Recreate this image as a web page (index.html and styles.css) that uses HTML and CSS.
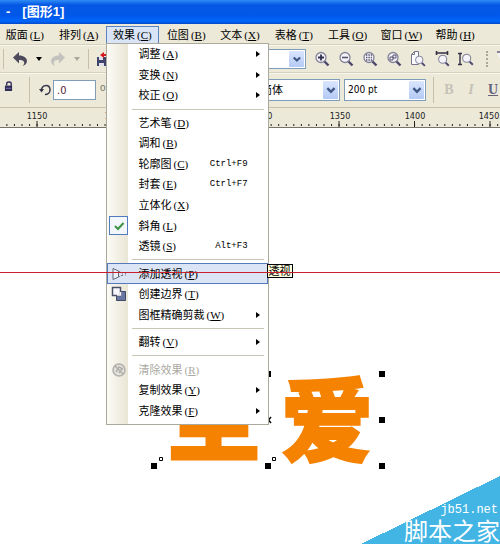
FILE: index.html
```html
<!DOCTYPE html>
<html lang="zh-CN">
<head>
<meta charset="utf-8">
<title>[图形1]</title>
<link rel="stylesheet" href="styles.css">
</head>
<body>
<svg class="defs" aria-hidden="true">
  <defs>
    <symbol id="lens" viewBox="0 0 16 16">
      <path d="M10 10l4.500 4.500" stroke="#4b4870" stroke-width="2.400"/>
      <circle cx="7" cy="6.500" r="5" fill="#f4f4fa" stroke="#85839a" stroke-width="1.300"/>
    </symbol>
    <symbol id="chevron" viewBox="0 0 16 20">
      <path d="M4.500 8l4 4 4-4" fill="none" stroke="#3f5785" stroke-width="2.600"/>
    </symbol>
    <symbol id="more" viewBox="0 0 4 8"><path d="M0 1l4 3-4 3z" fill="#000"/></symbol>
  </defs>
</svg>
<div class="app">
  <header class="title"><span>-</span><span>[图形1]</span></header>
  <nav class="menubar">
    <div class="top"><button>版面<i>(<u>L</u>)</i></button></div>
    <div class="top"><button>排列<i>(<u>A</u>)</i></button></div>
    <div class="top open"><button>效果<i>(<u>C</u>)</i></button>
      <div class="menu">
        <button class="item">调整<i>(<u>A</u>)</i><svg class="more"><use href="#more"/></svg></button>
        <button class="item">变换<i>(<u>N</u>)</i><svg class="more"><use href="#more"/></svg></button>
        <button class="item">校正<i>(<u>O</u>)</i><svg class="more"><use href="#more"/></svg></button>
        <hr>
        <button class="item">艺术笔<i>(<u>D</u>)</i></button>
        <button class="item">调和<i>(<u>B</u>)</i></button>
        <button class="item">轮廓图<i>(<u>C</u>)</i><kbd>Ctrl+F9</kbd></button>
        <button class="item">封套<i>(<u>E</u>)</i><kbd>Ctrl+F7</kbd></button>
        <button class="item">立体化<i>(<u>X</u>)</i></button>
        <button class="item"><svg class="mark" viewBox="0 0 20 20"><rect x=".5" y=".5" width="18" height="18" fill="#f3f6fb" stroke="#527ac0"/><path d="M6 10l3 3 5.500-6" fill="none" stroke="#3b9340" stroke-width="2"/></svg>斜角<i>(<u>L</u>)</i></button>
        <button class="item">透镜<i>(<u>S</u>)</i><kbd>Alt+F3</kbd></button>
        <hr>
        <button class="item active"><svg class="mark" viewBox="0 0 20 20"><path d="M4 4.500v11l5.500-2.500V7z" fill="#eef1fa" stroke="#626579"/><path d="M9.500 7l4 2M9.500 13l4-2" stroke="#77798a" stroke-dasharray="1.500 1"/><path d="M13.500 8v4M16.500 9v3" stroke="#77798a" stroke-dasharray="1.500 1"/></svg>添加透视<i>(<u>P</u>)</i><span class="tip" role="tooltip">透视</span></button>
        <button class="item"><svg class="mark" viewBox="0 0 20 20"><path d="M7.500 7.500h9v9h-9z" fill="#6876a2" stroke="#424866"/><path d="M3.500 3.500h8v8h-8z" fill="#f8f8fc" stroke="#4b4f68" stroke-width="1.500"/><path d="M8 11h3.500V8" fill="none" stroke="#f8f8fc" stroke-width="1.500"/></svg>创建边界<i>(<u>T</u>)</i></button>
        <button class="item">图框精确剪裁<i>(<u>W</u>)</i><svg class="more"><use href="#more"/></svg></button>
        <hr>
        <button class="item">翻转<i>(<u>V</u>)</i><svg class="more"><use href="#more"/></svg></button>
        <hr>
        <button class="item" disabled><svg class="mark" viewBox="0 0 20 20"><circle cx="10" cy="10" r="6" fill="#e4e2dc" stroke="#b1afaa" stroke-width="1.500"/><path d="M6 6l8 8M7 12l3-5 4 2M10 13l3-4" fill="none" stroke="#b1afaa" stroke-width="1.500"/></svg>清除效果<i>(<u>R</u>)</i></button>
        <button class="item">复制效果<i>(<u>Y</u>)</i><svg class="more"><use href="#more"/></svg></button>
        <button class="item">克隆效果<i>(<u>F</u>)</i><svg class="more"><use href="#more"/></svg></button>
      </div>
    </div>
    <div class="top"><button>位图<i>(<u>B</u>)</i></button></div>
    <div class="top"><button>文本<i>(<u>X</u>)</i></button></div>
    <div class="top"><button>表格<i>(<u>T</u>)</i></button></div>
    <div class="top"><button>工具<i>(<u>O</u>)</i></button></div>
    <div class="top"><button>窗口<i>(<u>W</u>)</i></button></div>
    <div class="top"><button>帮助<i>(<u>H</u>)</i></button></div>
  </nav>
  <div class="bar standard">
    <div class="group left">
      <span class="rule"></span>
      <button class="tool" aria-label="撤消"><svg viewBox="0 0 16 16"><path d="M1 6.500L7 1v3.500c5 0 8 2.500 8 5.500 0 2.500-2 4.500-4.500 5 1.500-1.500 2-2.500 1.500-4C11.500 9.500 10 9 7 9v3.500z" fill="#4e4a5e"/></svg></button>
      <button class="drop" aria-label="撤消列表"><svg viewBox="0 0 6 4"><path d="M0 0h6L3 4z"/></svg></button>
      <button class="tool" aria-label="重做"><svg viewBox="0 0 16 16"><path d="M15 6.500L9 1v3.500c-5 0-8 2.500-8 5.500 0 2.500 2 4.500 4.500 5C4 13.500 3.500 12.500 4 11c.5-1.500 2-2 5-2v3.500z" fill="#c3c2bd"/></svg></button>
      <button class="drop" aria-label="重做列表"><svg viewBox="0 0 6 4"><path d="M0 0h6L3 4z" fill="#aaa89e"/></svg></button>
      <span class="rule"></span>
      <button class="tool" aria-label="导入"><svg viewBox="0 0 16 16"><path d="M0 6h9v9H0z" fill="#40436a"/><path d="M2 6h4v3H2zM2 12h5v3H2z" fill="#dfe1ee"/><path d="M3 4l4-3v2h4v6H9V5H7v2z" fill="#d61a22"/></svg></button>
    </div>
    <div class="group right">
      <label class="combo zoom"><select aria-label="缩放"><option></option></select><svg><use href="#chevron"/></svg></label>
      <button class="tool" aria-label="放大"><svg viewBox="0 0 16 16"><use href="#lens"/><path d="M4 6.500h6M7 3.500v6" stroke="#34314f" stroke-width="1.800"/></svg></button>
      <button class="tool" aria-label="缩小"><svg viewBox="0 0 16 16"><use href="#lens"/><path d="M4 6.500h6" stroke="#55516f" stroke-width="1.600"/></svg></button>
      <button class="tool" aria-label="缩放选定"><svg viewBox="0 0 16 16"><use href="#lens"/><path d="M4 4h6M4 6.500h6M4 9h6" stroke="#55516f" stroke-width="1.400" stroke-dasharray="1.400 1"/></svg></button>
      <button class="tool" aria-label="缩放全部"><svg viewBox="0 0 16 16"><use href="#lens"/><path d="M4 6h3v3H4zM7 4h3v3H7z" fill="none" stroke="#55516f"/></svg></button>
      <button class="tool" aria-label="缩放页面"><svg viewBox="0 0 16 16"><path d="M1.500 13.500v-10l3-3h4v13z" fill="#fafaff" stroke="#77758c"/><path d="M1.500 3.500h3v-3" fill="none" stroke="#77758c"/><use href="#lens" x="4" y="4" width="12" height="12"/></svg></button>
      <button class="tool" aria-label="缩放页宽"><svg viewBox="0 0 16 16"><use href="#lens" x="3" y="3" width="13" height="13"/><path d="M2 2h12M2.500 0v4M13.500 0v4" stroke="#333145" stroke-width="1.600"/></svg></button>
      <button class="tool" aria-label="缩放页高"><svg viewBox="0 0 16 16"><use href="#lens" x="3" y="2" width="13" height="13"/><path d="M2 2v12M0 2.500h4M0 13.500h4" stroke="#333145" stroke-width="1.400"/></svg></button>
      <span class="dots"></span>
      <button class="tool" aria-label="贴齐"><svg viewBox="0 0 16 16"><path d="M1 1h14v5H5v5" fill="#f4f4fa" stroke="#65627c" stroke-width="1.500"/></svg></button>
    </div>
  </div>
  <div class="bar props">
    <div class="group left">
      <svg class="lock" viewBox="0 0 10 12"><path d="M3 5V3q0-2 2.500-2T8 3v3" fill="none" stroke="#302e59" stroke-width="1.500"/><path d="M1 5h8v6H1z" fill="#302e59"/><path d="M2 8h6" stroke="#7a79a3"/></svg>
      <span class="rule"></span>
      <label class="angle"><svg viewBox="0 0 12 12"><path d="M2.500 7C2 3.500 4.500 1.500 7 1.500S11 3.500 11 6s-2 4.500-5 4.500" fill="none" stroke="#38364c" stroke-width="1.500"/><path d="M0 5h5L2.500 8.500z" fill="#38364c"/></svg><input type="text" value=".0" aria-label="旋转角度"><span class="degree">o</span></label>
    </div>
    <div class="group right">
      <label class="combo font"><select aria-label="字体"><option>简体</option></select><svg><use href="#chevron"/></svg></label>
      <label class="combo size"><select aria-label="字号"><option>200 pt</option></select><svg><use href="#chevron"/></svg></label>
      <span class="rule"></span>
      <button class="format bold" aria-label="粗体" disabled>B</button>
      <button class="format italic" aria-label="斜体" disabled>I</button>
      <button class="format under" aria-label="下划线">U</button>
    </div>
  </div>
  <div class="ruler">
    <svg width="500" height="21">
      <path d="M6.400 17H500" stroke="#222" stroke-width="2" stroke-dasharray="1 6.550"/>
      <path d="M36.500 16H500" stroke="#222" stroke-width="6" stroke-dasharray="1 74.500"/>
      <text x="37" y="11">1150</text><text x="115" y="11">1200</text><text x="262" y="11">1300</text><text x="340" y="11">1350</text><text x="415" y="11">1400</text><text x="489" y="11">1450</text>
    </svg>
  </div>
  <main class="canvas">
    <svg class="art" width="500" height="416" viewBox="0 128 500 416">
      <text x="168" y="453">至</text><text x="281" y="454">爱</text>
      <path d="M265 371h6v6h-6zM379 371h6v6h-6zM379 417h6v6h-6zM379 463h6v6h-6zM265 463h6v6h-6zM151 463h6v6h-6z"/>
      <path d="M266 417l5 6M271 417l-5 6" stroke="#000" stroke-width="1.500"/>
      <path d="M159.500 457.500h3v3h-3zM272.500 457.500h3v3h-3z" fill="#fff" stroke="#000"/>
    </svg>
    <div class="guide"></div>
    <div class="brand"><span>jb51.net</span><strong>脚本之家</strong></div>
  </main>
</div>
</body>
</html>
```
FILE: styles.css
```css
* { box-sizing: border-box; }
body {
  margin: 0;
  overflow: hidden;
  background: #fff;
  color: #000;
  font: 11px/14px "Liberation Sans", "Noto Sans CJK SC", sans-serif;
}
button, select, input { margin: 0; padding: 0; border: 0; background: none; color: inherit; font: inherit; }
svg { flex: none; overflow: hidden; }
.defs { position: absolute; width: 0; height: 0; }
.app { display: flex; flex-direction: column; min-height: 100vh; background: #ece9d8; }

.title {
  display: flex;
  align-items: center;
  gap: 12px;
  height: 24px;
  padding-left: 6px;
  background: linear-gradient(#2f8cf5, #0558e4 20%, #0057e8 65%, #0066fb 88%, #0349c8);
  color: #fff;
  font-size: 13px;
  font-weight: bold;
}

.menubar {
  display: grid;
  grid-template-columns: repeat(9, 1fr);
  align-items: end;
  width: 484px;
  height: 20px;
  margin-left: -2px;
}
.top { position: relative; height: 18px; }
.top > button { width: 100%; height: 18px; white-space: nowrap; }
.open > button { border: 1px solid #5c83c2; background: #d9e5f6; }
i { margin-left: 2px; font: 11px/14px "Liberation Serif", serif; }
u { text-underline-offset: 1px; }

.menu {
  position: absolute;
  z-index: 3;
  top: 17px;
  left: 0;
  display: flex;
  flex-direction: column;
  width: 163px;
  height: 382px;
  padding-bottom: 3px;
  border: 1px solid #aaa99b;
  background: linear-gradient(90deg, #fcfbf5, #e9e6d6 21px, #fff 21px);
}
.menu hr { width: 132px; height: 1px; margin: 3px 4px 3px auto; border: 0; background: #c9c6b6; }
.item {
  position: relative;
  display: flex;
  flex: 1;
  align-items: center;
  padding: 0 8px 0 32px;
  text-align: left;
  white-space: nowrap;
}
.item:disabled { color: #aaa99f; }
.active { background: #dbe5f5; box-shadow: inset 0 0 0 1px #5579bd; }
.mark { width: 20px; height: 20px; margin: 0 10px 0 -30px; }
.more { width: 4px; height: 8px; margin-left: auto; }
kbd { margin: 0 12px 0 auto; font: 9px/14px "Liberation Mono", monospace; }
.tip {
  position: absolute;
  left: 160px;
  top: 1px;
  padding: 0 1px;
  border: 1px solid #000;
  background: #ffffe1;
  line-height: 12px;
}

.bar { display: flex; justify-content: space-between; border-top: 1px solid #d5d1bd; box-shadow: inset 0 1px #f8f7ef; }
.group { display: flex; align-items: center; }
.rule { width: 1px; height: 20px; background: #c4c0ac; }
.tool { width: 16px; height: 16px; }
.tool svg { display: block; width: 16px; height: 16px; }
.drop svg { display: block; width: 6px; height: 4px; }
.standard { height: 28px; }
.standard .left { gap: 8px; padding-left: 3px; }
.standard .right { gap: 8px; width: 232px; }
.dots { flex: none; width: 2px; height: 16px; margin-left: 4px; border-left: 2px dotted #aaa795; }

.combo { position: relative; display: flex; height: 20px; border: 1px solid #7f9db9; background: #fff; }
.combo select { width: 100%; padding-left: 4px; appearance: none; }
.combo svg {
  position: absolute;
  top: 1px;
  right: 1px;
  width: 15px;
  height: 16px;
  border-radius: 1px;
  background: linear-gradient(#dbe6fe, #b3c9f5);
  pointer-events: none;
}
.zoom { flex: none; width: 38px; border-left: 0; }
.standard .tool { flex: none; }
.props { height: 35px; }
.props .left { padding-left: 4px; }
.props .rule { height: 26px; }
.lock { width: 9px; height: 11px; margin: 0 16px 8px 0; }
.angle { display: flex; align-items: center; margin-left: 9px; }
.angle svg { width: 12px; height: 12px; margin-right: 2px; }
.angle input { width: 43px; height: 20px; padding-left: 3px; border: 1px solid #7f9db9; background: #fff; color: #5a2338; }
.angle input, .size { font-family: "DejaVu Sans Condensed", "DejaVu Sans", sans-serif; }
.size { font-size: 10px; }
.degree { margin: -5px 0 0 4px; color: #77756b; font-size: 10px; }
.props .right { gap: 4px; width: 240px; }
.props .combo { flex: none; height: 22px; }
.props .combo svg { height: 18px; }
.font { width: 80px; }
.font select { padding-left: 0; }
.size { width: 82px; }
.size select { padding-left: 3px; }
.props .right .rule { flex: none; margin: 0 2px 0 3px; }
.format { flex: none; width: 18px; height: 20px; color: #c5c2b6; font: bold 14px/20px "Liberation Serif", serif; }
.italic { font-style: italic; }
.under { color: #65627c; text-decoration: underline; }

.ruler { height: 21px; overflow: hidden; border-top: 1px solid #c4c0ac; border-bottom: 1px solid #77756b; }
.ruler svg { display: block; }
.ruler text { fill: #222; font: 9px "DejaVu Sans Condensed", "DejaVu Sans", sans-serif; text-anchor: middle; }

.canvas { position: relative; flex: 1; min-height: 416px; overflow: hidden; background: #fff; }
.art { display: block; }
.art text { fill: #f58200; stroke: #f58200; stroke-width: 2px; font: 900 92px "Noto Sans CJK SC", sans-serif; }
.guide { position: absolute; z-index: 4; top: 144px; right: 0; left: 0; height: 1px; background: #c8202d; }
.brand {
  position: absolute;
  right: 0;
  bottom: 0;
  display: flex;
  flex-direction: column;
  align-items: flex-end;
  justify-content: flex-end;
  width: 139px;
  height: 68px;
  background: linear-gradient(to bottom right, transparent 50%, #42b5e5 50%);
  color: #fff;
}
.brand span { padding-right: 2px; font: 12px/12px "Liberation Mono", monospace; }
.brand strong { font: 24px/28px "Noto Sans CJK SC", sans-serif; }
```
